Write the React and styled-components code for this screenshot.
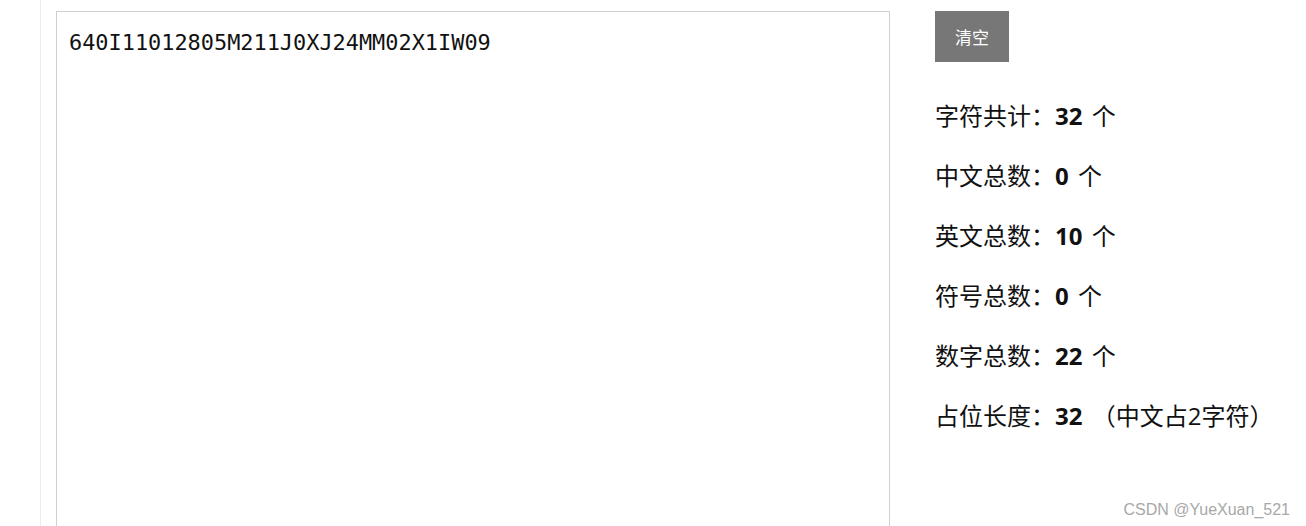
import React from "react";
import styled, { createGlobalStyle } from "styled-components";

const Global = createGlobalStyle`
  html, body { margin: 0; padding: 0; background: #fff; overflow: hidden; }
  body { font-family: "Open Sans", "Noto Sans CJK SC", sans-serif; }
`;

const Page = styled.div`
  height: 526px;
  padding-left: 40px;
  position: relative;
  overflow: hidden;
`;

const Frame = styled.div`
  height: 100%;
  border-left: 1px solid #ececec;
  padding: 11px 0 0 15px;
  display: flex;
  gap: 45px;
  align-items: flex-start;
`;

const Input = styled.textarea`
  width: 834px;
  height: 560px;
  box-sizing: border-box;
  border: 1px solid #cfcfcf;
  padding: 16px 12px;
  margin: 0;
  font-family: "DejaVu Sans Mono", "Liberation Mono", monospace;
  font-size: 21.9px;
  line-height: 30px;
  color: #111;
  background: #fff;
  resize: none;
  outline: none;
`;

const Side = styled.div`
  display: flex;
  flex-direction: column;
  align-items: flex-start;
`;

const Button = styled.button`
  width: 74px;
  height: 51px;
  border: none;
  background: #777;
  color: #fff;
  font-family: "Noto Sans CJK SC", sans-serif;
  font-size: 17px;
  padding: 0;
  margin-bottom: 36px;
`;

const Stats = styled.div`
  display: flex;
  flex-direction: column;
  gap: 24px;
`;

const Row = styled.div`
  font-size: 24px;
  line-height: 36px;
  height: 36px;
  color: #111;
  white-space: pre;
  font-family: "Open Sans", "Noto Sans CJK SC", sans-serif;
`;

const Num = styled.b`
  font-weight: 700;
  margin-right: 3px;
`;

const Watermark = styled.div`
  position: absolute;
  right: 16px;
  bottom: 7px;
  font-family: "Liberation Sans", sans-serif;
  font-size: 16px;
  color: #a8a8a8;
`;

const stats = [
  ["字符共计：", "32", " 个"],
  ["中文总数：", "0", " 个"],
  ["英文总数：", "10", " 个"],
  ["符号总数：", "0", " 个"],
  ["数字总数：", "22", " 个"],
  ["占位长度：", "32", " （中文占2字符）"],
];

export default function App() {
  return (
    <>
      <Global />
      <Page>
        <Frame>
          <Input defaultValue="640I11012805M211J0XJ24MM02X1IW09" spellCheck={false} />
          <Side>
            <Button>清空</Button>
            <Stats>
              {stats.map(([label, n, tail]) => (
                <Row key={label}>
                  {label}
                  <Num>{n}</Num>
                  {tail}
                </Row>
              ))}
            </Stats>
          </Side>
        </Frame>
        <Watermark>CSDN @YueXuan_521</Watermark>
      </Page>
    </>
  );
}
